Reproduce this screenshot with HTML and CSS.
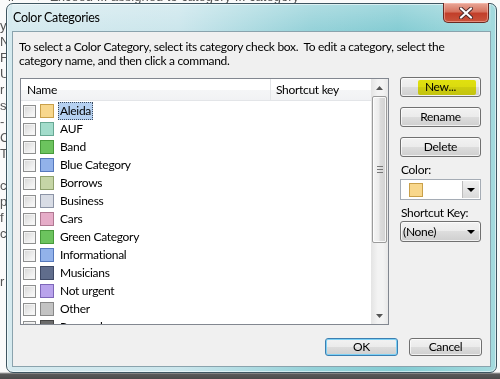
FILE: index.html
```html
<!DOCTYPE html>
<html>
<head>
<meta charset="utf-8">
<link rel="stylesheet" href="styles.css">
</head>
<body>
<div class="desktop">
  <div class="bg-doc">
    <div class="bg-top">ll &nbsp;&nbsp;&nbsp;&nbsp;&nbsp;▾ &nbsp;Exceed ... assigned to category ... category</div>
    <div class="bg-lines">
      <div>y</div><div>N</div><div>F</div><div>U</div><div>r</div><div>s</div><div>-</div><div>C</div><div>T</div><div>&nbsp;</div><div>c</div><div>p</div><div>f</div><div>c</div><div>&nbsp;</div><div>&nbsp;</div><div>r</div>
    </div>
  </div>
  <div class="window">
    <div class="titlebar">
      <span class="title">Color Categories</span>
      <div class="close"><svg width="14" height="12" viewBox="0 0 14 12"><path d="M2 1.5 L12 10.5 M12 1.5 L2 10.5" stroke="#4a2a2a" stroke-width="4" stroke-linecap="round"/><path d="M2 1.5 L12 10.5 M12 1.5 L2 10.5" stroke="#fff" stroke-width="2.2" stroke-linecap="round"/></svg></div>
    </div>
    <div class="client">
      <p class="intro">To select a Color Category, select its category check box.&nbsp; To edit a category, select the<br>category name, and then click a command.</p>
      <div class="content">
        <div class="list">
          <div class="list-main">
            <div class="list-head">
              <div class="col-name">Name</div>
              <div class="col-key">Shortcut key</div>
            </div>
            <div class="rows">
              <div class="row"><span class="chk"></span><span class="sw" style="background:#f8d78c;border-color:#c9a04a"></span><span class="lbl sel">Aleida</span></div>
              <div class="row"><span class="chk"></span><span class="sw" style="background:#a2dccb;border-color:#67a894"></span><span class="lbl">AUF</span></div>
              <div class="row"><span class="chk"></span><span class="sw" style="background:#6cc35e;border-color:#479a3b"></span><span class="lbl">Band</span></div>
              <div class="row"><span class="chk"></span><span class="sw" style="background:#92b2ea;border-color:#5679bd"></span><span class="lbl">Blue Category</span></div>
              <div class="row"><span class="chk"></span><span class="sw" style="background:#c5d5a6;border-color:#8ea16c"></span><span class="lbl">Borrows</span></div>
              <div class="row"><span class="chk"></span><span class="sw" style="background:#d8dce5;border-color:#8c94a6"></span><span class="lbl">Business</span></div>
              <div class="row"><span class="chk"></span><span class="sw" style="background:#e6acc8;border-color:#b07892"></span><span class="lbl">Cars</span></div>
              <div class="row"><span class="chk"></span><span class="sw" style="background:#6cc35e;border-color:#479a3b"></span><span class="lbl">Green Category</span></div>
              <div class="row"><span class="chk"></span><span class="sw" style="background:#92b2ea;border-color:#5679bd"></span><span class="lbl">Informational</span></div>
              <div class="row"><span class="chk"></span><span class="sw" style="background:#606d8c;border-color:#3e4966"></span><span class="lbl">Musicians</span></div>
              <div class="row"><span class="chk"></span><span class="sw" style="background:#b9a3ec;border-color:#7e67b9"></span><span class="lbl">Not urgent</span></div>
              <div class="row"><span class="chk"></span><span class="sw" style="background:#c3c3c3;border-color:#888"></span><span class="lbl">Other</span></div>
              <div class="row"><span class="chk"></span><span class="sw" style="background:#6b6b6b;border-color:#444"></span><span class="lbl">Personal</span></div>
            </div>
          </div>
          <div class="scrollbar">
            <div class="sb-btn"><svg width="7" height="4" viewBox="0 0 7 4"><path d="M0 4 L3.5 0 L7 4 Z" fill="#555"/></svg></div>
            <div class="sb-thumb"><span class="grip"></span></div>
            <div class="sb-track"></div>
            <div class="sb-btn"><svg width="7" height="4" viewBox="0 0 7 4"><path d="M0 0 L3.5 4 L7 0 Z" fill="#555"/></svg></div>
          </div>
        </div>
        <div class="side">
          <div class="btn hl">New...</div>
          <div class="btn gap">Rename</div>
          <div class="btn gap">Delete</div>
          <div class="label">Color:</div>
          <div class="combo">
            <div class="combo-val"><span class="csw"></span></div>
            <div class="combo-arrow"><svg width="8" height="4" viewBox="0 0 8 4"><path d="M0 0 L8 0 L4 4 Z" fill="#000"/></svg></div>
          </div>
          <div class="label">Shortcut Key:</div>
          <div class="dd">
            <span>(None)</span>
            <svg width="8" height="4" viewBox="0 0 8 4"><path d="M0 0 L8 0 L4 4 Z" fill="#000"/></svg>
          </div>
        </div>
      </div>
      <div class="footer">
        <div class="btn fbtn def">OK</div>
        <div class="btn fbtn">Cancel</div>
      </div>
    </div>
  </div>
</div>
</body>
</html>
```
FILE: styles.css
```css
html, body {
  margin: 0;
  padding: 0;
}
body {
  width: 500px;
  height: 379px;
  overflow: hidden;
  font-family: Lato, "Open Sans", sans-serif;
  font-size: 12px;
  letter-spacing: -0.3px;
  color: #000;
}
.desktop {
  position: relative;
  width: 500px;
  height: 379px;
  overflow: hidden;
  background: linear-gradient(to bottom, #fafafa 0, #fafafa 372px, #5a5a5a 374px, #4a4a4a 100%);
}
.bg-doc {
  font-family: "Liberation Sans", sans-serif;
  color: #555;
  font-size: 13px;
  letter-spacing: 0;
}
.bg-top {
  margin-top: -10px;
  height: 14px;
  line-height: 14px;
  padding-left: 8px;
  white-space: nowrap;
}
.bg-lines {
  padding-top: 14px;
  line-height: 16px;
}
.window {
  position: absolute;
  left: 6px;
  top: 3px;
  width: 491px;
  height: 370px;
  box-sizing: border-box;
  border: 1px solid #3e5661;
  border-radius: 7px;
  background: linear-gradient(to right, #d6eaef 0%, #cbe6ec 35%, #96d2d9 62%, #84ccd3 80%, #a4dade 100%);
  padding: 0 5px 5px;
  display: flex;
  flex-direction: column;
  box-shadow: inset 0 0 0 1px rgba(255,255,255,0.55);
}
.titlebar {
  height: 27px;
  flex: none;
  display: flex;
  align-items: center;
  padding-left: 1px;
  background: linear-gradient(to bottom, rgba(255,255,255,0.25), rgba(255,255,255,0));
}
.title {
  font-size: 12.5px;
  line-height: 15px;
  margin-top: -1px;
}
.close {
  position: absolute;
  top: -1px;
  right: 7px;
  width: 46px;
  height: 20px;
  box-sizing: border-box;
  border: 1px solid #6a2a22;
  border-top: none;
  border-radius: 0 0 5px 5px;
  background: linear-gradient(to bottom, #e9a898 0%, #d6735f 45%, #c23f2a 55%, #c9543c 100%);
  box-shadow: inset 0 0 0 1px rgba(255,200,190,0.5);
  display: flex;
  align-items: center;
  justify-content: center;
}
.client {
  flex: 1;
  box-sizing: border-box;
  border: 1px solid #8aa3ad;
  background: #f0f0f0;
  padding: 8px 8px 0 6px;
  display: flex;
  flex-direction: column;
}
.intro {
  margin: 0;
  line-height: 14px;
  white-space: nowrap;
}
.content {
  display: flex;
  margin-top: 9px;
}
.list {
  width: 369px;
  height: 247px;
  margin-top: 1px;
  margin-left: 1px;
  box-sizing: border-box;
  border: 1px solid #828790;
  background: #fff;
  display: flex;
}
.list-main {
  flex: 1;
  display: flex;
  flex-direction: column;
  overflow: hidden;
}
.list-head {
  height: 21px;
  flex: none;
  display: flex;
  border-bottom: 1px solid #e3e5e8;
  background: linear-gradient(to bottom, #ffffff 0%, #ffffff 50%, #f5f6f7 51%, #f1f2f4 100%);
}
.col-name {
  width: 243px;
  border-right: 1px solid #e3e5e8;
  padding-left: 6px;
  line-height: 21px;
}
.col-key {
  padding-left: 5px;
  line-height: 21px;
}
.rows {
  padding-top: 1px;
  flex: 1;
  overflow: hidden;
}
.row {
  height: 18px;
  display: flex;
  align-items: center;
}
.chk {
  width: 13px;
  height: 13px;
  margin-left: 2px;
  box-sizing: border-box;
  border: 1px solid #8e8f8f;
  background: linear-gradient(135deg, #d6d6d6 0%, #f2f2f2 70%, #fbfbfb 100%);
  box-shadow: inset 0 0 0 1px #f4f4f4;
}
.sw {
  width: 14px;
  height: 14px;
  margin-left: 4px;
  box-sizing: border-box;
  border: 1px solid #888;
}
.lbl {
  margin-left: 4px;
  padding: 0 1px;
  line-height: 16px;
  border: 1px dotted transparent;
}
.lbl.sel {
  background: #b6d1f1;
  border-color: #3c4a5c;
}
.scrollbar {
  width: 17px;
  flex: none;
  display: flex;
  flex-direction: column;
  background: linear-gradient(to right, #e4e4e4, #f3f3f3 40%, #f3f3f3 70%, #e8e8e8);
}
.sb-btn {
  height: 17px;
  flex: none;
  display: flex;
  align-items: center;
  justify-content: center;
}
.sb-thumb {
  height: 147px;
  flex: none;
  margin: 0 1px;
  box-sizing: border-box;
  border: 1px solid #9b9b9b;
  border-radius: 2px;
  background: linear-gradient(to right, #f5f5f5 0%, #ececec 45%, #dcdcdc 55%, #d2d2d2 100%);
  box-shadow: inset 0 0 0 1px rgba(255,255,255,0.8);
  display: flex;
  align-items: center;
  justify-content: center;
}
.grip {
  width: 6px;
  height: 5px;
  border-top: 1px solid #777;
  border-bottom: 1px solid #777;
  background: linear-gradient(to bottom, transparent 2px, #777 2px, #777 3px, transparent 3px);
}
.sb-track {
  flex: 1;
}
.side {
  width: 81px;
  margin-left: 11px;
  display: flex;
  flex-direction: column;
}
.btn {
  position: relative;
  height: 20px;
  box-sizing: border-box;
  border: 1px solid #707070;
  border-radius: 3px;
  background: linear-gradient(to bottom, #f2f2f2 0%, #ebebeb 49%, #dddddd 50%, #cfcfcf 100%);
  box-shadow: inset 0 0 0 1px rgba(255,255,255,0.7);
  display: flex;
  align-items: center;
  justify-content: center;
  line-height: 14px;
}
.btn.gap {
  margin-top: 10px;
}
.hl::before {
  content: "";
  position: absolute;
  left: 17px;
  top: 2px;
  width: 58px;
  height: 15px;
  background: #eeee10;
  border-radius: 2px;
  filter: blur(0.6px);
  mix-blend-mode: multiply;
}
.label {
  margin-top: 6px;
  line-height: 14px;
  height: 14px;
  padding-left: 1px;
}
.combo {
  margin-top: 2px;
  height: 21px;
  box-sizing: border-box;
  border: 1px solid #a5acb5;
  background: #fff;
  display: flex;
}
.combo-val {
  flex: 1;
  display: flex;
  align-items: center;
  padding-left: 8px;
}
.csw {
  width: 14px;
  height: 14px;
  box-sizing: border-box;
  border: 1px solid #c9a04a;
  background: #f8d78c;
}
.combo-arrow {
  width: 16px;
  margin: 1px;
  border-left: 1px solid #bcbcbc;
  background: linear-gradient(to bottom, #f0f0f0, #dadada);
  display: flex;
  align-items: center;
  justify-content: center;
}
.dd {
  margin-top: 1px;
  height: 21px;
  box-sizing: border-box;
  border: 1px solid #707070;
  border-radius: 3px;
  background: linear-gradient(to bottom, #f2f2f2 0%, #ebebeb 49%, #dddddd 50%, #cfcfcf 100%);
  box-shadow: inset 0 0 0 1px rgba(255,255,255,0.7);
  display: flex;
  align-items: center;
  justify-content: space-between;
  padding: 0 5px 0 2px;
}
.footer {
  margin-top: 13px;
  display: flex;
  justify-content: flex-end;
  gap: 11px;
}
.fbtn {
  width: 73px;
  height: 18px;
}
.fbtn.def {
  border-color: #3c7fb1;
  box-shadow: inset 0 0 0 1px #7ed1f5;
}
```
